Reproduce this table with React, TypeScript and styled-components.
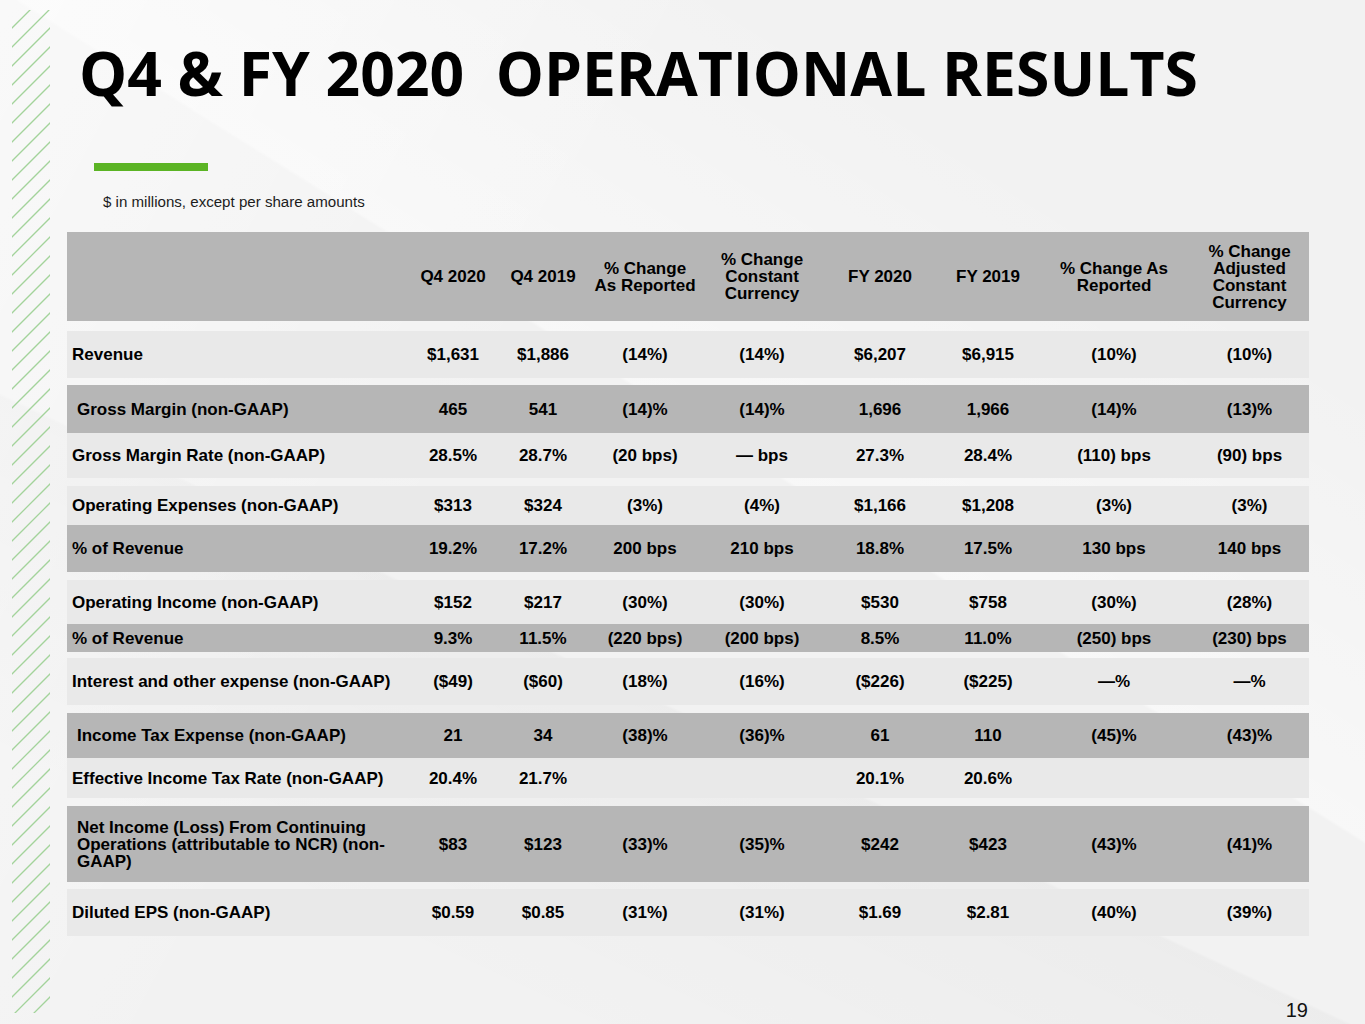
import React from "react";
import styled, { createGlobalStyle } from "styled-components";

const GlobalStyle = createGlobalStyle`
    html,
    body {
        margin: 0;
        padding: 0;
    }

    body {
        font-family: "Liberation Sans", Arial, sans-serif;
        color: #000;
        background: #f3f3f3;
    }
`;

const COLUMNS = "341px 90px 90px 114px 120px 116px 100px 152px 119px";

const Slide = styled.div`
    display: flex;
    width: 1365px;
    height: 1024px;
    overflow: hidden;
    background:
        linear-gradient(118deg, rgba(255, 255, 255, 0.55) 0%, rgba(255, 255, 255, 0) 38%),
        linear-gradient(205deg, rgba(0, 0, 0, 0) 62%, rgba(0, 0, 0, 0.025) 62.2%, rgba(0, 0, 0, 0) 85%),
        linear-gradient(32deg, rgba(255, 255, 255, 0) 55%, rgba(255, 255, 255, 0.45) 55.2%, rgba(255, 255, 255, 0) 80%),
        #f2f2f2;
`;

const Stripes = styled.svg`
    flex: none;
    display: block;
    margin: 10px 0 0 12px;
    width: 38px;
    height: 1003px;
`;

const Main = styled.main`
    display: flex;
    flex-direction: column;
    margin-left: 17px;
    width: 1242px;
`;

const Title = styled.h1`
    margin: 0;
    padding: 40px 0 0 12px;
    font-family: "Open Sans", "Liberation Sans", sans-serif;
    font-weight: 700;
    font-size: 60.6px;
    line-height: 65px;
    white-space: pre;
    color: #000;
`;

const AccentBar = styled.div`
    margin: 58px 0 0 27px;
    width: 114px;
    height: 8px;
    background: #5bb424;
`;

const Units = styled.p`
    margin: 23px 0 0 36px;
    font-size: 15.1px;
    line-height: 16px;
    color: #1c1c1c;
`;

const Table = styled.div`
    display: flex;
    flex-direction: column;
    margin-top: 22px;
`;

const Row = styled.div<{ $tone: "light" | "dark"; $height: number; $gap: number }>`
    display: grid;
    grid-template-columns: ${COLUMNS};
    align-items: center;
    height: ${(p) => p.$height}px;
    margin-top: ${(p) => p.$gap}px;
    background: ${(p) => (p.$tone === "dark" ? "#b6b6b6" : "#e9e9e9")};
    font-weight: 700;
    font-size: 17px;
    line-height: 17px;
`;

const Label = styled.div<{ $indent?: boolean }>`
    padding-left: ${(p) => (p.$indent ? 10 : 5)}px;
`;

const Cell = styled.div`
    text-align: center;
    white-space: nowrap;
`;

const HeadCell = styled.div`
    text-align: center;
`;

const PageNumber = styled.div`
    margin-top: 63px;
    padding-right: 1px;
    text-align: right;
    font-size: 20px;
    line-height: 22px;
    color: #111;
`;

type Line = {
    label: React.ReactNode;
    indent?: boolean;
    values: string[];
    tone: "light" | "dark";
    height: number;
    gap: number;
};

const headers: React.ReactNode[] = [
    "Q4 2020",
    "Q4 2019",
    <>% Change<br />As Reported</>,
    <>% Change<br />Constant<br />Currency</>,
    "FY 2020",
    "FY 2019",
    <>% Change As<br />Reported</>,
    <>% Change<br />Adjusted<br />Constant<br />Currency</>,
];

const lines: Line[] = [
    {
        label: "Revenue",
        values: ["$1,631", "$1,886", "(14%)", "(14%)", "$6,207", "$6,915", "(10%)", "(10%)"],
        tone: "light",
        height: 47,
        gap: 10,
    },
    {
        label: "Gross Margin (non-GAAP)",
        indent: true,
        values: ["465", "541", "(14)%", "(14)%", "1,696", "1,966", "(14)%", "(13)%"],
        tone: "dark",
        height: 48,
        gap: 7,
    },
    {
        label: "Gross Margin Rate (non-GAAP)",
        values: ["28.5%", "28.7%", "(20 bps)", "— bps", "27.3%", "28.4%", "(110) bps", "(90) bps"],
        tone: "light",
        height: 45,
        gap: 0,
    },
    {
        label: "Operating Expenses (non-GAAP)",
        values: ["$313", "$324", "(3%)", "(4%)", "$1,166", "$1,208", "(3%)", "(3%)"],
        tone: "light",
        height: 39,
        gap: 8,
    },
    {
        label: "% of Revenue",
        values: ["19.2%", "17.2%", "200 bps", "210 bps", "18.8%", "17.5%", "130 bps", "140 bps"],
        tone: "dark",
        height: 47,
        gap: 0,
    },
    {
        label: "Operating Income (non-GAAP)",
        values: ["$152", "$217", "(30%)", "(30%)", "$530", "$758", "(30%)", "(28%)"],
        tone: "light",
        height: 44,
        gap: 8,
    },
    {
        label: "% of Revenue",
        values: ["9.3%", "11.5%", "(220 bps)", "(200 bps)", "8.5%", "11.0%", "(250) bps", "(230) bps"],
        tone: "dark",
        height: 28,
        gap: 0,
    },
    {
        label: "Interest and other expense (non-GAAP)",
        values: ["($49)", "($60)", "(18%)", "(16%)", "($226)", "($225)", "—%", "—%"],
        tone: "light",
        height: 47,
        gap: 6,
    },
    {
        label: "Income Tax Expense (non-GAAP)",
        indent: true,
        values: ["21", "34", "(38)%", "(36)%", "61", "110", "(45)%", "(43)%"],
        tone: "dark",
        height: 45,
        gap: 8,
    },
    {
        label: "Effective Income Tax Rate (non-GAAP)",
        values: ["20.4%", "21.7%", "", "", "20.1%", "20.6%", "", ""],
        tone: "light",
        height: 40,
        gap: 0,
    },
    {
        label: (
            <>
                Net Income (Loss) From Continuing
                <br />
                Operations (attributable to NCR) (non-
                <br />
                GAAP)
            </>
        ),
        indent: true,
        values: ["$83", "$123", "(33)%", "(35)%", "$242", "$423", "(43)%", "(41)%"],
        tone: "dark",
        height: 76,
        gap: 8,
    },
    {
        label: "Diluted EPS (non-GAAP)",
        values: ["$0.59", "$0.85", "(31%)", "(31%)", "$1.69", "$2.81", "(40%)", "(39%)"],
        tone: "light",
        height: 47,
        gap: 7,
    },
];

// diagonal hatch on the left edge
const StripePattern = () => {
    const items = [];
    for (let k = 0; 18 + 19 * k < 1003 + 38; k++) {
        const c = 18 + 19 * k;
        items.push(<line key={k} x1={0} y1={c} x2={c} y2={0} />);
    }
    return (
        <Stripes viewBox="0 0 38 1003">
            <defs>
                <clipPath id="hatch-clip">
                    <rect x="0" y="0" width="38" height="1003" />
                </clipPath>
            </defs>
            <g clipPath="url(#hatch-clip)" stroke="#a3d39b" strokeWidth="1.3" strokeLinecap="round">
                {items}
            </g>
        </Stripes>
    );
};

export default function App(): JSX.Element {
    return (
        <>
            <GlobalStyle />
            <Slide>
                <StripePattern />
                <Main>
                    <Title>{"Q4 & FY 2020  OPERATIONAL RESULTS"}</Title>
                    <AccentBar />
                    <Units>$ in millions, except per share amounts</Units>
                    <Table>
                        <Row $tone="dark" $height={89} $gap={0}>
                            <div />
                            {headers.map((h, i) => (
                                <HeadCell key={i}>{h}</HeadCell>
                            ))}
                        </Row>
                        {lines.map((line, i) => (
                            <Row key={i} $tone={line.tone} $height={line.height} $gap={line.gap}>
                                <Label $indent={line.indent}>{line.label}</Label>
                                {line.values.map((v, j) => (
                                    <Cell key={j}>{v}</Cell>
                                ))}
                            </Row>
                        ))}
                    </Table>
                    <PageNumber>19</PageNumber>
                </Main>
            </Slide>
        </>
    );
}
